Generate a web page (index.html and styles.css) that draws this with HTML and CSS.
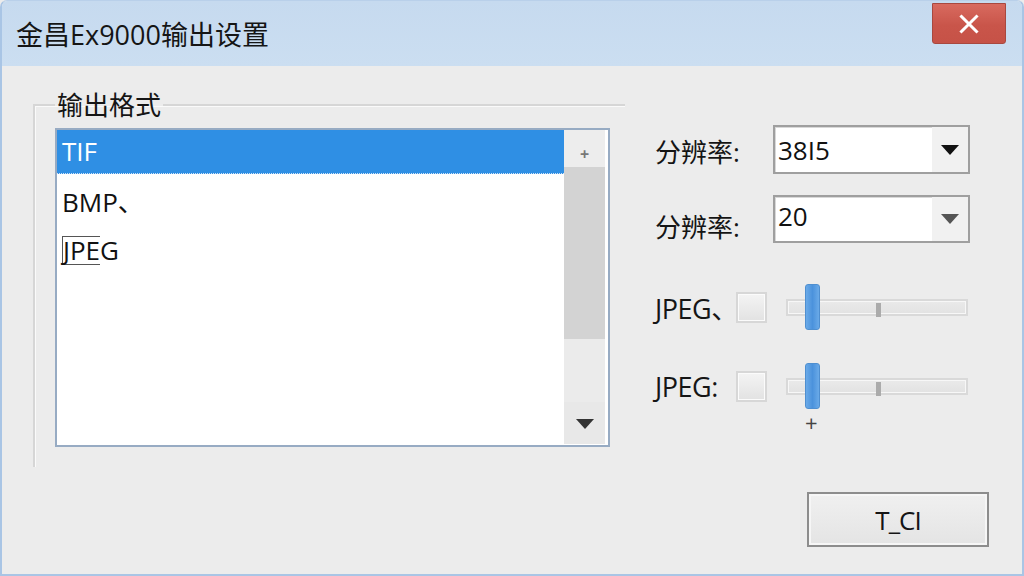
FILE: index.html
```html
<!DOCTYPE html>
<html lang="zh">
<head>
<meta charset="utf-8">
<title>金昌Ex9000输出设置</title>
<link rel="stylesheet" href="styles.css">
</head>
<body>
<div class="window">
  <div class="titlebar">
    <span class="title">金昌Ex9000输出设置</span>
    <button class="close" aria-label="关闭">
      <svg width="20" height="20" viewBox="0 0 20 20"><path d="M2.5 2.5 L17.5 17.5 M17.5 2.5 L2.5 17.5" stroke="#fff" stroke-width="3" stroke-linecap="square"/></svg>
    </button>
  </div>
  <div class="content">
    <fieldset class="group">
      <legend>输出格式</legend>
      <div class="listbox">
        <div class="items">
          <div class="item selected">TIF</div>
          <div class="item">BMP、</div>
          <div class="item"><span class="focusbox">JPE</span>G</div>
        </div>
        <div class="scrollbar">
          <div class="sb-btn sb-up"><span class="sb-plus">+</span></div>
          <div class="sb-thumb"></div>
          <div class="sb-track"></div>
          <div class="sb-btn sb-down"><svg width="18" height="10" viewBox="0 0 18 10"><path d="M0 0 H18 L9 10 Z" fill="#333"/></svg></div>
        </div>
      </div>
    </fieldset>
    <div class="side">
      <div class="row row-combo">
        <span class="label">分辨率:</span>
        <div class="combo">
          <span class="combo-value">38I5</span>
          <span class="combo-arrow"><svg width="18" height="10" viewBox="0 0 18 10"><path d="M0 0 H18 L9 10 Z" fill="#111"/></svg></span>
        </div>
      </div>
      <div class="row row-combo second">
        <span class="label">分辨率:</span>
        <div class="combo">
          <span class="combo-value">20</span>
          <span class="combo-arrow"><svg width="18" height="10" viewBox="0 0 18 10"><path d="M0 0 H18 L9 10 Z" fill="#555"/></svg></span>
        </div>
      </div>
      <div class="row row-slider first-slider">
        <span class="label label-jpeg">JPEG、</span>
        <span class="checkbox"></span>
        <div class="slider">
          <div class="track"></div>
          <span class="tick"></span>
          <span class="thumb"></span>
        </div>
      </div>
      <div class="row row-slider second-slider">
        <span class="label label-jpeg">JPEG:</span>
        <span class="checkbox"></span>
        <div class="slider">
          <div class="track"></div>
          <span class="tick"></span>
          <span class="thumb"></span>
        </div>
      </div>
      <div class="plus-row"><span class="plus">+</span></div>
      <button class="button">T_CI</button>
    </div>
  </div>
</div>
</body>
</html>
```
FILE: styles.css
```css
html, body {
  margin: 0;
  padding: 0;
  background: #ececec;
}
body {
  font-family: "Open Sans", "Noto Sans CJK SC", sans-serif;
  color: #1a1a1a;
}
.window {
  width: 1024px;
  height: 576px;
  box-sizing: border-box;
  border: 2px solid #a9c5e5;
  border-top: 1px solid #b9d0ea;
  border-radius: 7px 7px 0 0;
  background: #ececec;
  display: flex;
  flex-direction: column;
  overflow: hidden;
}
.titlebar {
  height: 65px;
  flex: none;
  background: linear-gradient(#c6daef, #cbdef1);
  display: flex;
  justify-content: space-between;
  align-items: flex-start;
  padding-left: 14px;
  padding-right: 16px;
}
.title {
  font-size: 27px;
  line-height: 32px;
  margin-top: 18px;
  color: #151515;
}
.close {
  margin-top: 2px;
  width: 74px;
  height: 41px;
  border: 1px solid #a8483f;
  border-radius: 0 0 3px 3px;
  background: linear-gradient(#d86a5f, #c9554a 55%, #c65247);
  display: flex;
  align-items: center;
  justify-content: center;
  padding: 0;
}
.content {
  flex: 1;
  display: flex;
  padding: 24px 0 0 31px;
}
.group {
  margin: 0;
  width: 572px;
  height: 377px;
  box-sizing: border-box;
  border: none;
  border-top: 2px solid #d6d6d6;
  border-left: 2px solid #d6d6d6;
  box-shadow: inset 1px 1px 0 #fafafa;
  padding: 0 15px 0 20px;
  flex: none;
}
.group legend {
  font-size: 26px;
  line-height: 30px;
  padding: 0 2px;
  color: #151515;
}
.listbox {
  margin-top: 8px;
  width: 555px;
  height: 319px;
  box-sizing: border-box;
  border: 2px solid #97abc3;
  background: #fff;
  display: flex;
  padding: 0 3px 1px 0;
}
.items {
  flex: 1;
  display: flex;
  flex-direction: column;
}
.item {
  height: 48px;
  line-height: 48px;
  font-size: 26px;
  padding-left: 5px;
  color: #111;
}
.item.selected {
  height: 43px;
  line-height: 43px;
  background: #2f8fe4;
  color: #fff;
  border-bottom: 1px dotted #cfe4fa;
  margin-bottom: 4px;
}
.focusbox {
  border-top: 1px solid #555;
  border-left: 1px solid #555;
  border-bottom: 1.5px solid #555;
  line-height: 27px;
  display: inline-block;
}
.scrollbar {
  width: 41px;
  background: #ececec;
  display: flex;
  flex-direction: column;
}
.sb-btn {
  display: flex;
  align-items: center;
  justify-content: center;
}
.sb-up {
  height: 37px;
  box-sizing: border-box;
  padding-top: 10px;
  background: #ededed;
}
.sb-plus {
  font-size: 16px;
  color: #777;
  font-weight: bold;
  line-height: 16px;
}
.sb-thumb {
  height: 172px;
  background: #d3d3d3;
}
.sb-track {
  height: 63px;
  background: #ebebeb;
}
.sb-down {
  flex: 1;
  background: #e8e8e8;
  padding-top: 2px;
}
.side {
  margin-left: 30px;
  width: 334px;
  display: flex;
  flex-direction: column;
  padding-top: 35px;
}
.row {
  display: flex;
  align-items: center;
}
.label {
  font-size: 26px;
  color: #151515;
}
.row-combo {
  height: 49px;
}
.row-combo .label {
  width: 118px;
  flex: none;
  padding-top: 2px;
}
.row-combo.second {
  margin-top: 21px;
  height: 48px;
}
.row-combo.second .label {
  padding-top: 14px;
}
.combo {
  width: 197px;
  height: 49px;
  box-sizing: border-box;
  border: 2px solid #9f9f9f;
  box-shadow: inset 1px 1px 0 #d8d8d8;
  background: #fff;
  display: flex;
  align-items: center;
}
.second .combo {
  height: 48px;
}
.combo-value {
  flex: 1;
  font-size: 26px;
  padding-left: 3px;
  color: #111;
}
.second .combo-value {
  margin-top: -6px;
}
.combo-arrow {
  width: 36px;
  align-self: stretch;
  background: #f1f1f1;
  display: flex;
  align-items: center;
  justify-content: center;
}
.row-slider {
  height: 46px;
}
.first-slider {
  margin-top: 41px;
}
.second-slider {
  margin-top: 33px;
}
.label-jpeg {
  width: 81px;
  flex: none;
  font-size: 27px;
  letter-spacing: -0.5px;
}
.checkbox {
  width: 31px;
  height: 31px;
  box-sizing: border-box;
  border: 2px solid #d7d7d7;
  background: linear-gradient(#f4f4f4, #e2e2e2);
  box-shadow: inset 0 0 0 1px #fbfbfb;
  flex: none;
}
.slider {
  position: relative;
  margin-left: 19px;
  width: 182px;
  height: 46px;
  display: flex;
  align-items: center;
}
.track {
  width: 100%;
  height: 17px;
  box-sizing: border-box;
  border: 2px solid #d9d9d9;
  background: linear-gradient(#eaeaea, #e2e2e2);
  box-shadow: inset 0 0 0 1px #f7f7f7;
}
.tick {
  position: absolute;
  left: 90px;
  top: 19px;
  width: 5px;
  height: 14px;
  background: #ababab;
}
.thumb {
  position: absolute;
  left: 19px;
  top: 0;
  width: 15px;
  height: 46px;
  box-sizing: border-box;
  border-radius: 3px;
  border: 1px solid #4f8fd0;
  background: linear-gradient(90deg, #6aaae8, #4b92dc 50%, #6aaae8);
}
.plus-row {
  padding-left: 150px;
  height: 30px;
  margin-top: -2px;
}
.plus {
  font-size: 22px;
  line-height: 30px;
  color: #444;
}
.button {
  margin-top: 55px;
  align-self: flex-end;
  width: 182px;
  height: 55px;
  border: 2px solid #8d8d8d;
  box-shadow: inset 0 0 0 2px #f6f6f6;
  background: linear-gradient(#f0f0f0, #e4e4e4);
  font-family: "Open Sans", "Noto Sans CJK SC", sans-serif;
  font-size: 26px;
  color: #151515;
  padding: 0;
  letter-spacing: -1px;
}
```
